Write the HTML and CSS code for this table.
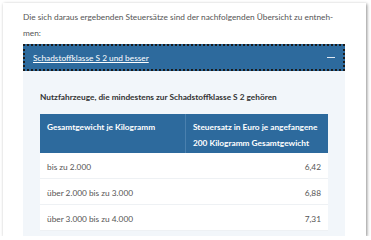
FILE: index.html
```html
<!DOCTYPE html>
<html lang="de">
<head>
<meta charset="utf-8">
<link rel="stylesheet" href="styles.css">
</head>
<body>
<div class="card">
  <p class="intro">Die sich daraus ergebenden Steuersätze sind der nachfolgenden Übersicht zu entneh-<br>men:</p>
  <div class="acc-head">
    <a class="acc-title" href="#">Schadstoffklasse S 2 und besser</a>
    <span class="acc-minus"></span>
  </div>
  <div class="acc-panel">
    <p class="caption">Nutzfahrzeuge, die mindestens zur Schadstoffklasse S 2 gehören</p>
    <table class="rates">
      <thead>
        <tr>
          <th class="c1">Gesamtgewicht je Kilogramm</th>
          <th class="c2">Steuersatz in Euro je angefangene<br>200 Kilogramm Gesamtgewicht</th>
        </tr>
      </thead>
      <tbody>
        <tr><td>bis zu 2.000</td><td class="num">6,42</td></tr>
        <tr><td>über 2.000 bis zu 3.000</td><td class="num">6,88</td></tr>
        <tr><td>über 3.000 bis zu 4.000</td><td class="num">7,31</td></tr>
      </tbody>
    </table>
  </div>
</div>
</body>
</html>
```

FILE: styles.css
```css
html, body {
  margin: 0;
  padding: 0;
  background: #ffffff;
  overflow: hidden;
}
body {
  font-family: Lato, "Open Sans", sans-serif;
  font-size: 8.3px;
  color: #555;
}
.card {
  margin: 3px 0 0 3px;
  width: 363px;
  height: 233px;
  background: #fff;
  box-shadow: 1px 1px 3px rgba(0,0,0,0.45);
  padding: 6px 0 0 20px;
  box-sizing: border-box;
  overflow: hidden;
}
.intro {
  margin: 0 0 3px;
  line-height: 16px;
}
.acc-head {
  width: 322px;
  height: 27px;
  box-sizing: border-box;
  background: #2d6a9d;
  border: 2px dotted #1b1b1b;
  display: flex;
  align-items: center;
  justify-content: space-between;
  padding: 0 4px 0 8px;
}
.acc-title {
  color: #fff;
  text-decoration: underline;
}
.acc-minus {
  width: 8px;
  height: 1.5px;
  background: #dfe8f2;
  margin-right: 4px;
}
.acc-panel {
  width: 322px;
  background: #f2f6fa;
  padding: 18px 17px 0;
  box-sizing: border-box;
  height: 200px;
}
.caption {
  margin: 0 0 9px;
  font-weight: bold;
  color: #333;
  line-height: 16px;
}
.rates {
  width: 288px;
  border-collapse: collapse;
  background: #fff;
}
.rates th {
  background: #2d6a9d;
  color: #fff;
  text-align: left;
  vertical-align: top;
  font-weight: bold;
  line-height: 16px;
  padding: 5px 7px 2px;
  white-space: nowrap;
}
.rates th.c1 {
  width: 131px;
  border-right: 1px solid #4a80ae;
}
.rates td {
  line-height: 16px;
  padding: 6px 7px 3px;
  border-bottom: 1px solid #eef1f4;
}
.rates td.num {
  text-align: right;
}
```
